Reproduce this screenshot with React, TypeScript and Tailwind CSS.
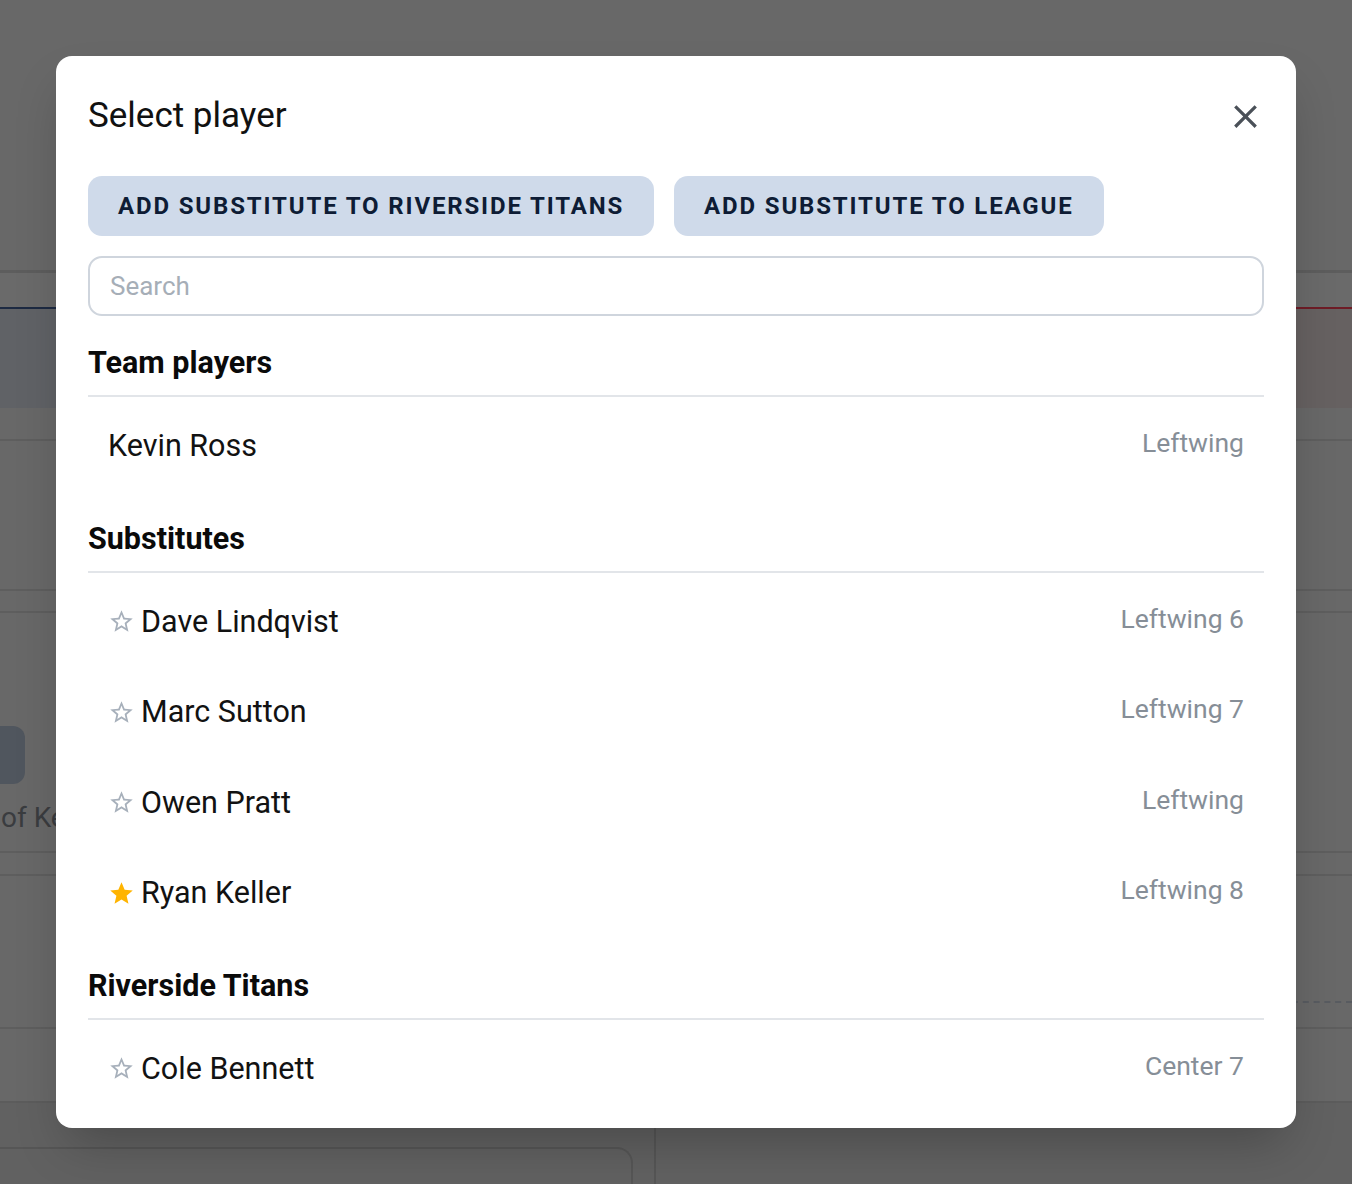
import React from 'react';

type Player = {
  name: string;
  position: string;
  starred?: boolean;
  showStar?: boolean;
};

const sections: { title: string; players: Player[] }[] = [
  {
    title: 'Team players',
    players: [{ name: 'Kevin Ross', position: 'Leftwing', showStar: false }],
  },
  {
    title: 'Substitutes',
    players: [
      { name: 'Dave Lindqvist', position: 'Leftwing 6', showStar: true },
      { name: 'Marc Sutton', position: 'Leftwing 7', showStar: true },
      { name: 'Owen Pratt', position: 'Leftwing', showStar: true },
      { name: 'Ryan Keller', position: 'Leftwing 8', showStar: true, starred: true },
    ],
  },
  {
    title: 'Riverside Titans',
    players: [{ name: 'Cole Bennett', position: 'Center 7', showStar: true }],
  },
];

function StarIcon({ filled }: { filled?: boolean }) {
  // material star / star-border glyphs
  return (
    <svg viewBox="0 0 24 24" className="h-[27px] w-[27px] shrink-0" aria-hidden="true">
      {filled ? (
        <path
          fill="#ffb400"
          d="M12 17.27 18.18 21l-1.64-7.03L22 9.24l-7.19-.61L12 2 9.19 8.63 2 9.24l5.46 4.73L5.82 21z"
        />
      ) : (
        <path
          fill="#a7b0bb"
          d="m22 9.24-7.19-.62L12 2 9.19 8.63 2 9.24l5.46 4.73L5.82 21 12 17.27 18.18 21l-1.63-7.03L22 9.24zM12 15.4l-3.76 2.27 1-4.28-3.32-2.88 4.38-.38L12 6.1l1.71 4.04 4.38.38-3.32 2.88 1 4.28L12 15.4z"
        />
      )}
    </svg>
  );
}

function CloseIcon() {
  return (
    <svg viewBox="0 0 24 24" className="h-[39px] w-[39px]" aria-hidden="true">
      <path
        fill="#4a5058"
        d="M19 6.41 17.59 5 12 10.59 6.41 5 5 6.41 10.59 12 5 17.59 6.41 19 12 13.41 17.59 19 19 17.59 13.41 12z"
      />
    </svg>
  );
}

function PlayerRow({ player }: { player: Player }) {
  return (
    <li className="flex h-[90.5px] items-center justify-between px-5">
      <div className="flex items-center gap-[6px]">
        {player.showStar && <StarIcon filled={player.starred} />}
        <span className="text-[30.5px] leading-[36px] text-[#121212]">{player.name}</span>
      </div>
      <span className="mb-[6px] text-[26.5px] leading-[32px] text-[#868e97]">{player.position}</span>
    </li>
  );
}

function Background() {
  return (
    <div className="flex flex-col">
      <div className="h-[270px]" />
      <div className="h-[3px] bg-[#5d5d5d]" />
      <div className="h-[34px] bg-[#6a6a6a]" />
      <div className="flex h-[2px]">
        <div className="flex-1 bg-[#1d2a42]" />
        <div className="flex-1 bg-[#6e1c26]" />
      </div>
      <div className="flex h-[99px]">
        <div className="flex-1 bg-[#606266]" />
        <div className="flex-1 bg-[#666161]" />
      </div>
      <div className="h-[31px]" />
      <div className="h-[150px] border-t-2 border-[#5e5e5e]" />
      <div className="h-[22px] border-t-2 border-[#5e5e5e]" />
      <div className="flex h-[240px] flex-col border-t-2 border-[#5e5e5e] pt-[113px]">
        <div className="-ml-[45px] h-[58px] w-[70px] rounded-xl bg-[#50565e]" />
        <span className="mt-[18px] pl-[1px] text-[28px] leading-[32px] text-[#3a3c3f]">of Ke</span>
      </div>
      <div className="h-[23px] border-t-2 border-[#5e5e5e]" />
      <div className="flex h-[153px] border-t-2 border-[#5e5e5e]">
        <div className="flex-1" />
        <div className="mt-[125px] w-[60px] border-t-2 border-dashed border-[#585b60]" />
      </div>
      <div className="flex h-[74px] border-t-2 border-[#5e5e5e]">
        <div className="flex-1" />
        <div className="mt-[85px] w-[60px] border-t-2 border-dashed border-[#585b60]" />
      </div>
      <div className="flex flex-1 border-t-2 border-[#5c5c5c] bg-[#616161] pt-[44px]">
        <div className="h-[60px] w-[633px] rounded-tr-2xl border-t-2 border-r-2 border-[#565656]" />
        <div className="ml-[21px] -mt-[46px] h-[120px] border-l-2 border-[#565656]" />
      </div>
    </div>
  );
}

export default function App() {
  return (
    <div className="relative h-[1184px] w-full overflow-hidden bg-[#686868] font-['Roboto','Liberation_Sans',sans-serif]">
      <Background />

      {/* Select player dialog */}
      <div className="absolute left-[56px] top-[56px] w-[1240px] rounded-2xl bg-white px-8 pb-[14px] pt-10 shadow-2xl">
        <div className="flex h-[40px] items-center justify-between">
          <h2 className="text-[35px] leading-[40px] text-[#111]">Select player</h2>
          <button type="button" aria-label="Close" className="-mr-[1px] flex items-center justify-center">
            <CloseIcon />
          </button>
        </div>

        <div className="mt-10 flex gap-5">
          <button
            type="button"
            className="h-[60px] rounded-[14px] bg-[#cfdaea] px-[30px] text-[24px] font-bold uppercase tracking-[1.85px] text-[#0e1c35]"
          >
            Add substitute to Riverside Titans
          </button>
          <button
            type="button"
            className="h-[60px] rounded-[14px] bg-[#cfdaea] px-[30px] text-[24px] font-bold uppercase tracking-[1.85px] text-[#0e1c35]"
          >
            Add substitute to league
          </button>
        </div>

        <input
          type="text"
          placeholder="Search"
          className="mt-5 h-[60px] w-full rounded-[14px] border-2 border-[#cfd5dd] px-5 text-[26px] text-[#111] outline-none placeholder:text-[#a6aeb7]"
        />

        {sections.map((section) => (
          <section key={section.title}>
            <h3 className="border-b-2 border-[#e2e5e9] pb-[14px] pt-[29px] text-[30.5px] font-bold leading-[36px] text-[#0a0a0a]">
              {section.title}
            </h3>
            <ul className="pt-1">
              {section.players.map((p) => (
                <PlayerRow key={p.name} player={p} />
              ))}
            </ul>
          </section>
        ))}
      </div>
    </div>
  );
}
